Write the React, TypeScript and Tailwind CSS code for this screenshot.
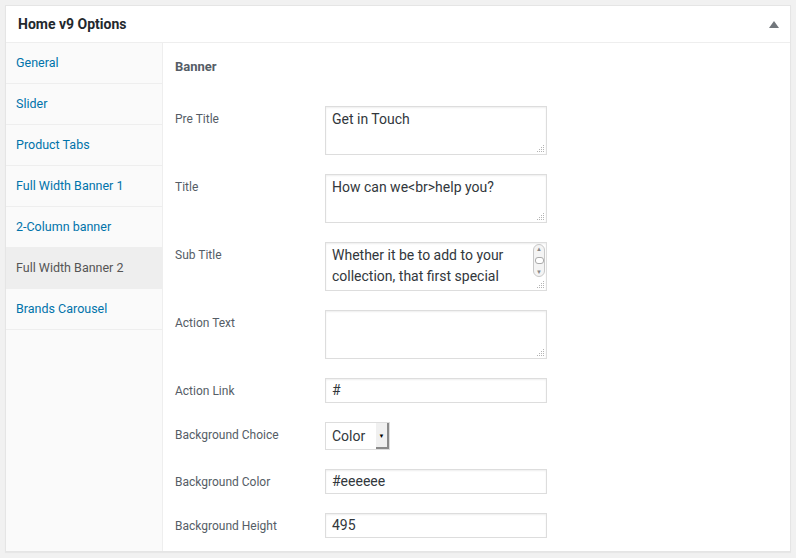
import React from 'react';

const tabs = [
  'General',
  'Slider',
  'Product Tabs',
  'Full Width Banner 1',
  '2-Column banner',
  'Full Width Banner 2',
  'Brands Carousel',
];

const ResizeGrip = () => (
  <svg className="absolute right-[1px] bottom-[1px]" width="9" height="9" viewBox="0 0 9 9">
    <g fill="#b4b4b4">
      <rect x="7" y="1" width="1" height="1" />
      <rect x="5" y="3" width="1" height="1" />
      <rect x="7" y="3" width="1" height="1" />
      <rect x="3" y="5" width="1" height="1" />
      <rect x="5" y="5" width="1" height="1" />
      <rect x="7" y="5" width="1" height="1" />
      <rect x="1" y="7" width="1" height="1" />
      <rect x="3" y="7" width="1" height="1" />
      <rect x="5" y="7" width="1" height="1" />
      <rect x="7" y="7" width="1" height="1" />
    </g>
  </svg>
);

const TextArea = ({ value, scroll }: { value: string; scroll?: boolean }) => (
  <div className="relative h-[49px] w-[222px] border border-[#dddddd] bg-white shadow-[inset_0_1px_2px_rgba(0,0,0,0.07)]">
    <div className={`h-full overflow-hidden px-[6px] pt-[2px] text-[14px] leading-[21px] text-[#32373c] ${scroll ? 'pr-[20px]' : ''}`}>
      {value}
    </div>
    {scroll && (
      <div className="absolute right-[1px] top-[1px] flex h-[33px] w-[12px] flex-col items-center justify-between rounded-[6px] border border-[#c8c8c8] bg-[#f4f4f4] py-[1px]">
        <span className="text-[6px] leading-[6px] text-[#888]">▲</span>
        <span className="h-[7px] w-[9px] rounded-[3px] border border-[#aaa] bg-white"></span>
        <span className="text-[6px] leading-[6px] text-[#888]">▼</span>
      </div>
    )}
    <ResizeGrip />
  </div>
);

const TextInput = ({ value }: { value: string }) => (
  <div className="flex h-[25px] w-[222px] items-center border border-[#dddddd] bg-white px-[6px] text-[14px] text-[#32373c] shadow-[inset_0_1px_2px_rgba(0,0,0,0.07)]">
    {value}
  </div>
);

const Row = ({ label, children }: { label: string; children: React.ReactNode }) => (
  <div className="flex">
    <div className="w-[150px] pt-[5px] text-[12px] leading-[16px] text-[#555d66]">{label}</div>
    {children}
  </div>
);

export default function App() {
  return (
    <div className="min-h-[558px] w-[796px] bg-[#f1f1f1] px-[5px] pt-[5px] font-['Roboto',sans-serif]">
      <div className="w-[786px] border border-[#e5e5e5] bg-white shadow-[0_1px_1px_rgba(0,0,0,0.04)]">
        <div className="flex h-[37px] items-center justify-between border-b border-[#eeeeee] pl-[12px] pr-[11px]">
          <h2 className="text-[14px] font-bold text-[#23282d]">Home v9 Options</h2>
          <svg width="10" height="7" viewBox="0 0 10 7">
            <polygon points="5,0 10,7 0,7" fill="#72777c" />
          </svg>
        </div>
        <div className="flex">
          <ul className="w-[157px] border-r border-[#eeeeee] bg-[#fafafa]">
            {tabs.map((t) => (
              <li
                key={t}
                className={`flex h-[41px] items-center border-b border-[#eeeeee] pl-[10px] text-[12.5px] ${
                  t === 'Full Width Banner 2' ? 'bg-[#eeeeee] text-[#555555]' : 'text-[#0073aa]'
                }`}
              >
                {t}
              </li>
            ))}
          </ul>
          <div className="flex-1 pl-[12px] pb-[13px]">
            <h3 className="pt-[16px] text-[13px] font-bold leading-[16px] text-[#555d66]">Banner</h3>
            <div className="mt-[31px] flex flex-col gap-[19px]">
              <Row label="Pre Title">
                <TextArea value="Get in Touch" />
              </Row>
              <Row label="Title">
                <TextArea value="How can we<br>help you?" />
              </Row>
              <Row label="Sub Title">
                <TextArea value="Whether it be to add to your collection, that first special" scroll />
              </Row>
              <Row label="Action Text">
                <TextArea value="" />
              </Row>
              <Row label="Action Link">
                <TextInput value="#" />
              </Row>
              <Row label="Background Choice">
                <div className="flex h-[28px] w-[65px] items-center justify-between border border-[#dddddd] bg-white pl-[6px] text-[14px] text-[#32373c]">
                  <span>Color</span>
                  <span className="flex h-[26px] w-[13px] items-center justify-center border-r-2 border-b-2 border-[#8a8a8a] bg-[#f0f0f0] text-[6px] text-black">▼</span>
                </div>
              </Row>
              <Row label="Background Color">
                <TextInput value="#eeeeee" />
              </Row>
              <Row label="Background Height">
                <TextInput value="495" />
              </Row>
            </div>
          </div>
        </div>
      </div>
    </div>
  );
}
